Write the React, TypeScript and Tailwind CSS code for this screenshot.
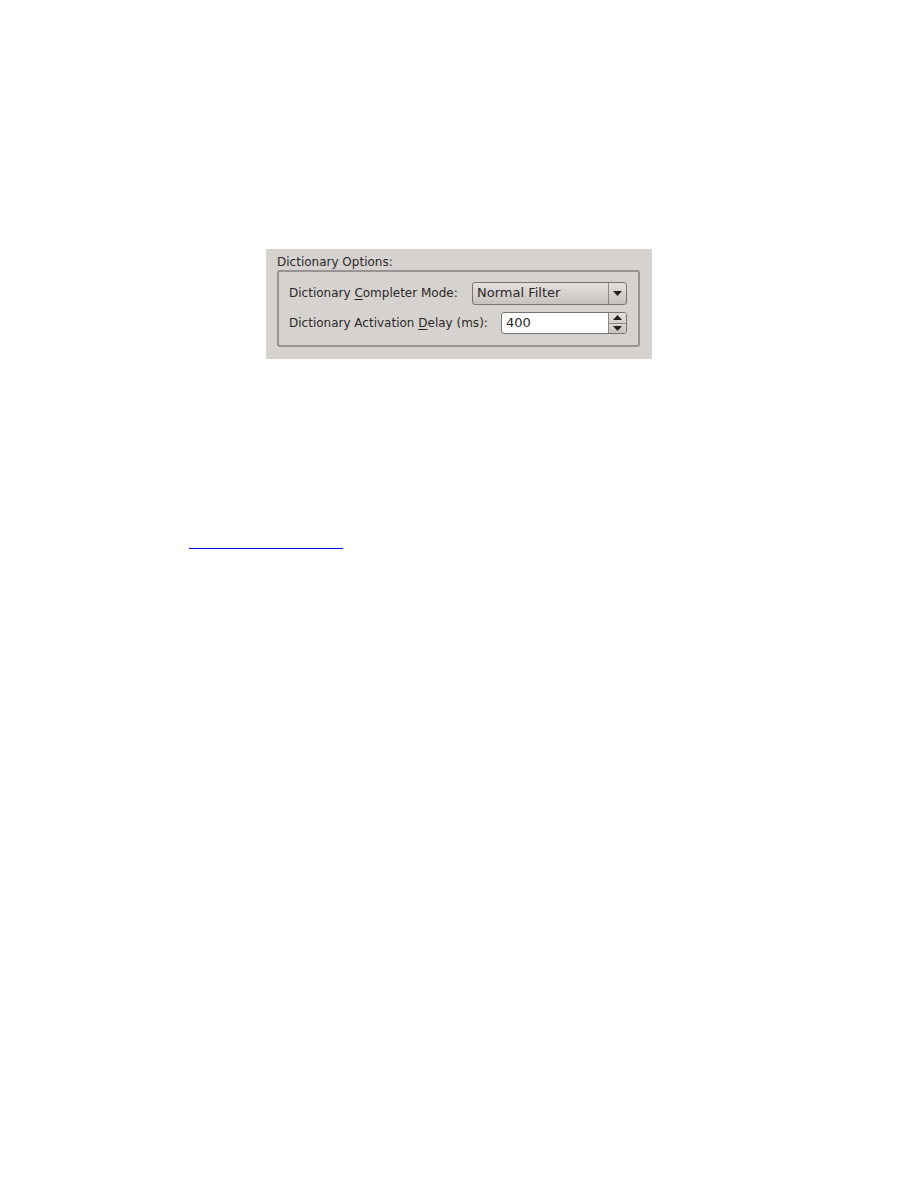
import { useState } from "react";

const FILTERS = ["Normal Filter"];

export default function App() {
  const [delay, setDelay] = useState(400);

  return (
    <main className="min-h-screen bg-white pt-[249px] font-['DejaVu_Sans',sans-serif] text-[12px] leading-4 text-[#2b2928]">
      <section className="mx-auto w-full max-w-[386px] bg-[#d6d2cf] pt-[5px] pr-3 pb-3 pl-[11px]">
        <fieldset className="min-w-0">
          <legend className="block">Dictionary Options:</legend>
          <div className="flex flex-col gap-[7px] rounded-[3px] border-2 border-[#979392] p-[11px] pt-[10px] pl-[10px]">
            <div className="flex items-start justify-between">
              <label htmlFor="mode" className="py-[3px] whitespace-nowrap">
                Dictionary <span className="underline underline-offset-2">C</span>ompleter Mode:
              </label>
              <div className="grid h-[23px] w-[155px] shrink-0 grid-cols-[1fr_18px] overflow-hidden rounded-[3px] border border-[#77736f] bg-linear-to-b from-[#e3e0dd] to-[#c6c2bf]">
                <select
                  id="mode"
                  className="col-span-2 col-start-1 row-start-1 min-w-0 appearance-none bg-transparent pb-px pl-1 text-[13px] text-[#2b2928] outline-none"
                >
                  {FILTERS.map((name) => (
                    <option key={name}>{name}</option>
                  ))}
                </select>
                <span className="pointer-events-none col-start-2 row-start-1 flex items-center justify-center border-l border-[#8a8683]">
                  <svg width="9" height="5" viewBox="0 0 9 5" fill="#221f1e" aria-hidden="true">
                    <path d="M0 0h9L4.5 5z" />
                  </svg>
                </span>
              </div>
            </div>
            <div className="flex items-start justify-between">
              <label htmlFor="delay" className="py-[3px] whitespace-nowrap">
                Dictionary Activation <span className="underline underline-offset-2">D</span>elay (ms):
              </label>
              <div className="flex h-[22px] w-[126px] shrink-0 overflow-hidden rounded-[3px] border border-[#77736f] bg-white">
                <input
                  id="delay"
                  type="text"
                  inputMode="numeric"
                  value={delay}
                  onChange={(e) => setDelay(Number(e.target.value) || 0)}
                  className="min-w-0 grow bg-transparent pl-1 text-[13px] text-[#2b2928] outline-none"
                />
                <div className="flex w-[18px] shrink-0 flex-col border-l border-[#8a8683]">
                  <button
                    type="button"
                    aria-label="Increase delay"
                    onClick={() => setDelay(delay + 1)}
                    className="flex grow items-center justify-center border-b border-[#8a8683] bg-linear-to-b from-[#e3e0dd] to-[#d3cfcc]"
                  >
                    <svg width="9" height="5" viewBox="0 0 9 5" fill="#221f1e" aria-hidden="true">
                      <path d="M0 5h9L4.5 0z" />
                    </svg>
                  </button>
                  <button
                    type="button"
                    aria-label="Decrease delay"
                    onClick={() => setDelay(Math.max(0, delay - 1))}
                    className="flex grow items-center justify-center bg-linear-to-b from-[#dbd7d4] to-[#c6c2bf]"
                  >
                    <svg width="9" height="5" viewBox="0 0 9 5" fill="#221f1e" aria-hidden="true">
                      <path d="M0 0h9L4.5 5z" />
                    </svg>
                  </button>
                </div>
              </div>
            </div>
          </div>
        </fieldset>
      </section>
      <hr className="mt-[189px] ml-[189px] h-px w-[154px] border-0 bg-[#0000ee]" />
    </main>
  );
}
